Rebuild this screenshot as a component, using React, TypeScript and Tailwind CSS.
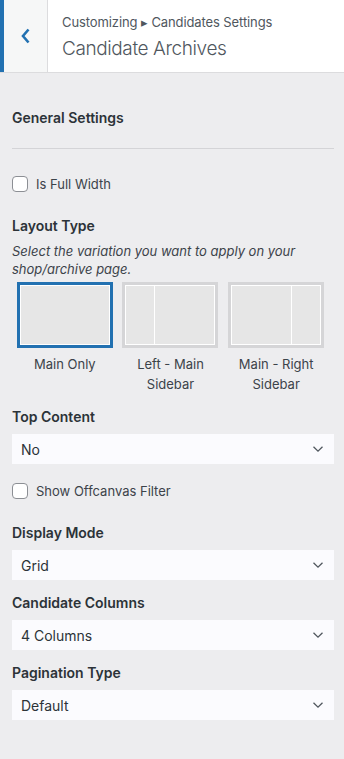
import type { ReactNode } from "react";

const FONT = "font-['Inter','Noto_Sans',sans-serif]";

function ChevronDown() {
  return (
    <svg width="12" height="8" viewBox="0 0 12 8" fill="none" className="shrink-0">
      <path d="M1.5 1.8 6 6.2l4.5-4.4" stroke="#50575e" strokeWidth="1.3" />
    </svg>
  );
}

function Heading({ children, className = "" }: { children: ReactNode; className?: string }) {
  return <div className={`text-[14px] font-semibold leading-[20px] text-[#2c3338] ${className}`}>{children}</div>;
}

function Select({ value }: { value: string }) {
  return (
    <div className="mt-[7px] flex h-[30px] items-center justify-between bg-[#fbfbfe] pl-[9px] pr-[10px] text-[14px] text-[#2c3338]">
      <span>{value}</span>
      <ChevronDown />
    </div>
  );
}

function Checkbox({ label }: { label: string }) {
  return (
    <label className="flex items-center gap-[8px] text-[13px] leading-[16px] text-[#3c434a]">
      <span className="h-[16px] w-[16px] rounded-[4px] border border-[#8c8f94] bg-white" />
      {label}
    </label>
  );
}

function LayoutBox({ kind, selected }: { kind: "full" | "left" | "right"; selected?: boolean }) {
  return (
    <div
      className={`h-[66px] w-[96px] border-[3px] ${selected ? "border-[#2271b1]" : "border-[#d5d5d7]"} bg-white p-px`}
    >
      <div className="flex h-full gap-px">
        {kind === "left" && <div className="w-[28px] bg-[#e6e6e6]" />}
        <div className="flex-1 bg-[#e6e6e6]" />
        {kind === "right" && <div className="w-[28px] bg-[#e6e6e6]" />}
      </div>
    </div>
  );
}

const LAYOUTS: { kind: "full" | "left" | "right"; label: ReactNode; selected?: boolean }[] = [
  { kind: "full", label: "Main Only", selected: true },
  { kind: "left", label: <>Left - Main<br />Sidebar</> },
  { kind: "right", label: <>Main - Right<br />Sidebar</> },
];

export default function App() {
  return (
    <div className={`${FONT} h-[759px] w-[344px] overflow-hidden bg-[#ededef]`}>
      {/* header */}
      <div className="flex h-[73px] border-b border-[#dcdcde] bg-white">
        <div className="flex w-[48px] items-center justify-center border-l-4 border-r border-[#dcdcde] border-l-[#2271b1] bg-[#f6f7f7]">
          <svg width="10" height="16" viewBox="0 0 10 16" fill="none">
            <path d="M7.5 1.5 2 8l5.5 6.5" stroke="#2271b1" strokeWidth="2.6" />
          </svg>
        </div>
        <div className="pl-[14px] pt-[13px]">
          <div className="text-[13px] leading-[18px] tracking-[-0.1px] text-[#50575e]">Customizing ▸ Candidates Settings</div>
          <div className="mt-[6px] text-[19px] font-light leading-[24px] tracking-[-0.4px] text-[#50575e]">Candidate Archives</div>
        </div>
      </div>

      <div className="pl-[12px] pr-[10px]">
        <Heading className="pt-[35px]">General Settings</Heading>
        <div className="mt-[20px] h-px bg-[#d4d4d7]" />

        <div className="mt-[27px]">
          <Checkbox label="Is Full Width" />
        </div>

        <Heading className="mt-[24px]">Layout Type</Heading>
        <p className="mt-[6px] text-[13px] italic leading-[18px] text-[#3c434a]">
          Select the variation you want to apply on your shop/archive page.
        </p>
        <div className="mt-[4px] grid w-[317px] grid-cols-3">
          {LAYOUTS.map((l, i) => (
            <div key={i} className="flex flex-col items-center">
              <LayoutBox kind={l.kind} selected={l.selected} />
              <div className="mt-[6px] text-center text-[13px] leading-[20px] text-[#3c434a]">{l.label}</div>
            </div>
          ))}
        </div>

        <Heading className="mt-[13px]">Top Content</Heading>
        <Select value="No" />

        <div className="mt-[19px]">
          <Checkbox label="Show Offcanvas Filter" />
        </div>

        <Heading className="mt-[24px]">Display Mode</Heading>
        <Select value="Grid" />

        <Heading className="mt-[13px]">Candidate Columns</Heading>
        <Select value="4 Columns" />

        <Heading className="mt-[13px]">Pagination Type</Heading>
        <Select value="Default" />
      </div>
    </div>
  );
}
